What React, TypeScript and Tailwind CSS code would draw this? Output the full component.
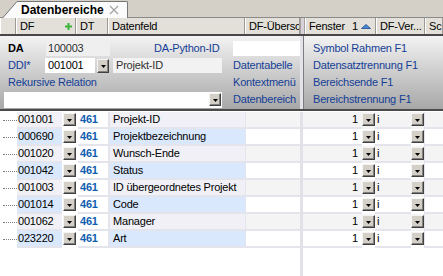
import React from 'react';

const blue = 'text-[#143e96]';

const rows = [
  ['001001', 'Projekt-ID'],
  ['000690', 'Projektbezeichnung'],
  ['001020', 'Wunsch-Ende'],
  ['001042', 'Status'],
  ['001003', 'ID übergeordnetes Projekt'],
  ['001014', 'Code'],
  ['001062', 'Manager'],
  ['023220', 'Art'],
];

function DropBtn({ w = 'w-[13px]', h = 'h-[13px]' }: { w?: string; h?: string }) {
  return (
    <div
      className={`flex ${w} ${h} items-center justify-center border border-t-[#f4f4f4] border-l-[#f4f4f4] border-r-[#404040] border-b-[#404040] bg-[#d4d0c8] shadow-[inset_-1px_-1px_0_#808080]`}
    >
      <svg width="5" height="3" viewBox="0 0 5 3" className="mt-[1px]">
        <path d="M0 0h5L2.5 3z" fill="#000" />
      </svg>
    </div>
  );
}

function HCell({ w, children, className = '' }: { w: string; children?: React.ReactNode; className?: string }) {
  return (
    <div
      className={`flex ${w} shrink-0 items-center overflow-hidden whitespace-nowrap border-r border-[#9c9892] pl-[4px] shadow-[inset_1px_0_0_#ffffff] ${className}`}
    >
      {children}
    </div>
  );
}

function GridRow({ df, name, odd }: { df: string; name: string; odd: boolean }) {
  const main = odd ? 'bg-[#f0f0f6]' : 'bg-[#d9e8fc]';
  const side = odd ? 'bg-[#f4f4f4]' : 'bg-white';
  const line = 'border-b-2 border-[#e4e4ec]';
  return (
    <div className="flex h-[17px] leading-[15px]">
      <div className="flex w-[17px] items-center pl-[3px]">
        <div className="h-0 flex-1 border-t border-dotted border-[#7c7c7c]" />
      </div>
      <div className={`w-[45px] pl-[1px] ${main} ${line}`}>{df}</div>
      <div className="w-[1px]" />
      <div className="w-[13px] pt-[1px]">
        <DropBtn />
      </div>
      <div className="w-[2px]" />
      <div className={`w-[30px] pl-[2px] font-bold text-[#1060b0] ${line}`}>461</div>
      <div className="w-[2px] bg-[#e4e4ec]" />
      <div className={`w-[135px] overflow-hidden whitespace-nowrap pl-[3px] ${main} ${line}`}>{name}</div>
      <div className="w-[1px] bg-[#e4e4ec]" />
      <div className={`w-[54px] ${side} ${line}`} />
      <div className="w-[3px] bg-[#e2e0e8]" />
      <div className={`w-[58px] pr-[3px] text-right ${side} ${line}`}>1</div>
      <div className={`w-[1px] ${side} ${line}`} />
      <div className={`w-[13px] pt-[1px] ${side}`}>
        <DropBtn />
      </div>
      <div className={`w-[35px] pl-[2px] ${side} ${line}`}>i</div>
      <div className={`w-[1px] ${side} ${line}`} />
      <div className={`w-[13px] pt-[1px] ${side}`}>
        <DropBtn />
      </div>
      <div className={`flex-1 border-l border-[#e4e4ec] ${side} ${line}`} />
    </div>
  );
}

export default function App() {
  return (
    <div className="flex h-[276px] w-[443px] flex-col overflow-hidden bg-white font-['Liberation_Sans',Arial,sans-serif] text-[11px] tracking-[-0.2px] text-black">
      {/* tab strip */}
      <div className="flex h-[18px] shrink-0 border-b border-[#8a8a8a] bg-[#d4d0c8]">
        <div className="relative z-10 ml-[3px] mt-[1px] -mb-px flex h-[17px]">
          <svg width="14" height="17" viewBox="0 0 14 17">
            <polygon points="0,17 14,0.5 14,17" fill="#fbfbfb" />
            <line x1="0" y1="16.5" x2="14" y2="0.5" stroke="#767676" strokeWidth="1" />
          </svg>
          <div className="flex h-[17px] w-[111px] items-center rounded-tr-[2px] border-t border-r border-[#767676] bg-[#fbfbfb]">
            <span className="ml-[4px] text-[12px] font-bold tracking-normal">Datenbereiche</span>
            <svg width="10" height="10" viewBox="0 0 10 10" className="ml-auto mr-[8px]">
              <path d="M1 1l8 8M9 1l-8 8" stroke="#a4a4a4" strokeWidth="1.3" />
            </svg>
          </div>
        </div>
      </div>

      {/* column header */}
      <div className="flex h-[18px] shrink-0 border-b-2 border-[#474747] bg-[#e3e0da]">
        <HCell w="w-[16px]" />
        <HCell w="w-[60px]">
          <span>DF</span>
          <svg width="7" height="7" viewBox="0 0 7 7" className="ml-auto mr-[3px]">
            <path d="M2.5 0h2v2.5H7v2H4.5V7h-2V4.5H0v-2h2.5z" fill="#3cb43c" />
          </svg>
        </HCell>
        <HCell w="w-[32px]">DT</HCell>
        <HCell w="w-[137px]">Datenfeld</HCell>
        <HCell w="w-[55px]">DF-Übersc</HCell>
        <div className="w-[5px] shrink-0 border-x border-[#a4a0a4] bg-[#d6d2d8]" />
        <HCell w="w-[71px]" className="pr-[4px]">
          <span>Fenster</span>
          <span className="ml-auto">1</span>
          <svg width="10" height="5" viewBox="0 0 10 5" className="ml-[3px]">
            <path d="M0.5 4.5L5 0.5l4.5 4z" fill="#4a8ad6" stroke="#1c4a90" strokeWidth="0.8" />
          </svg>
        </HCell>
        <HCell w="w-[49px]">DF-Ver...</HCell>
        <HCell w="flex-1">Sc</HCell>
      </div>

      {/* form panel */}
      <div className="flex h-[73px] shrink-0">
        <div className="w-[300px] bg-linear-to-b from-[#f3f3f3] to-[#a8a8a8] pt-[4px]">
          <div className="flex h-[17px] items-center pl-[8px]">
            <span className="w-[38px] font-bold">DA</span>
            <div className="h-[15px] w-[64px] bg-[#efefef] pl-[2px] leading-[15px] text-[#303030]">100003</div>
            <span className={`ml-[44px] w-[79px] ${blue}`}>DA-Python-ID</span>
            <div className="h-[15px] w-[67px] bg-white" />
          </div>
          <div className="flex h-[17px] items-center pl-[8px]">
            <span className={`w-[37px] ${blue}`}>DDI*</span>
            <div className="h-[15px] w-[50px] bg-white pl-[3px] leading-[15px]">001001</div>
            <div className="ml-[2px]">
              <DropBtn w="w-[12px]" h="h-[14px]" />
            </div>
            <div className="ml-[4px] h-[15px] w-[109px] bg-[#f2f2f2] pl-[3px] leading-[15px] text-[#303030]">Projekt-ID</div>
            <span className={`ml-[11px] ${blue}`}>Datentabelle</span>
          </div>
          <div className="flex h-[17px] items-center pl-[8px]">
            <span className={`w-[225px] ${blue}`}>Rekursive Relation</span>
            <span className={blue}>Kontextmenü</span>
          </div>
          <div className="flex h-[17px] items-center pl-[4px]">
            <div className="flex h-[16px] w-[218px] items-center justify-end bg-white pr-[1px]">
              <DropBtn w="w-[12px]" h="h-[13px]" />
            </div>
            <span className={`ml-[11px] whitespace-nowrap ${blue}`}>Datenbereich</span>
          </div>
        </div>
        <div className="w-[4px] border-r border-[#7c7c7c] bg-[#e4e2ea]" />
        <div className="flex-1 bg-linear-to-b from-[#f3f3f3] to-[#a8a8a8] pl-[9px] pt-[4px]">
          {['Symbol Rahmen F1', 'Datensatztrennung F1', 'Bereichsende F1', 'Bereichstrennung F1'].map((t) => (
            <div key={t} className={`flex h-[17px] items-center ${blue}`}>
              {t}
            </div>
          ))}
        </div>
      </div>
      <div className="h-[2px] shrink-0 bg-[#4a4a4a]" />

      {/* grid */}
      <div className="flex flex-1 flex-col pt-[1px]">
        {rows.map(([df, name], i) => (
          <GridRow key={df} df={df} name={name} odd={i % 2 === 0} />
        ))}
        <div className="flex flex-1">
          <div className="w-[300px]" />
          <div className="w-[3px] bg-[#e2e0e8]" />
        </div>
      </div>
    </div>
  );
}
